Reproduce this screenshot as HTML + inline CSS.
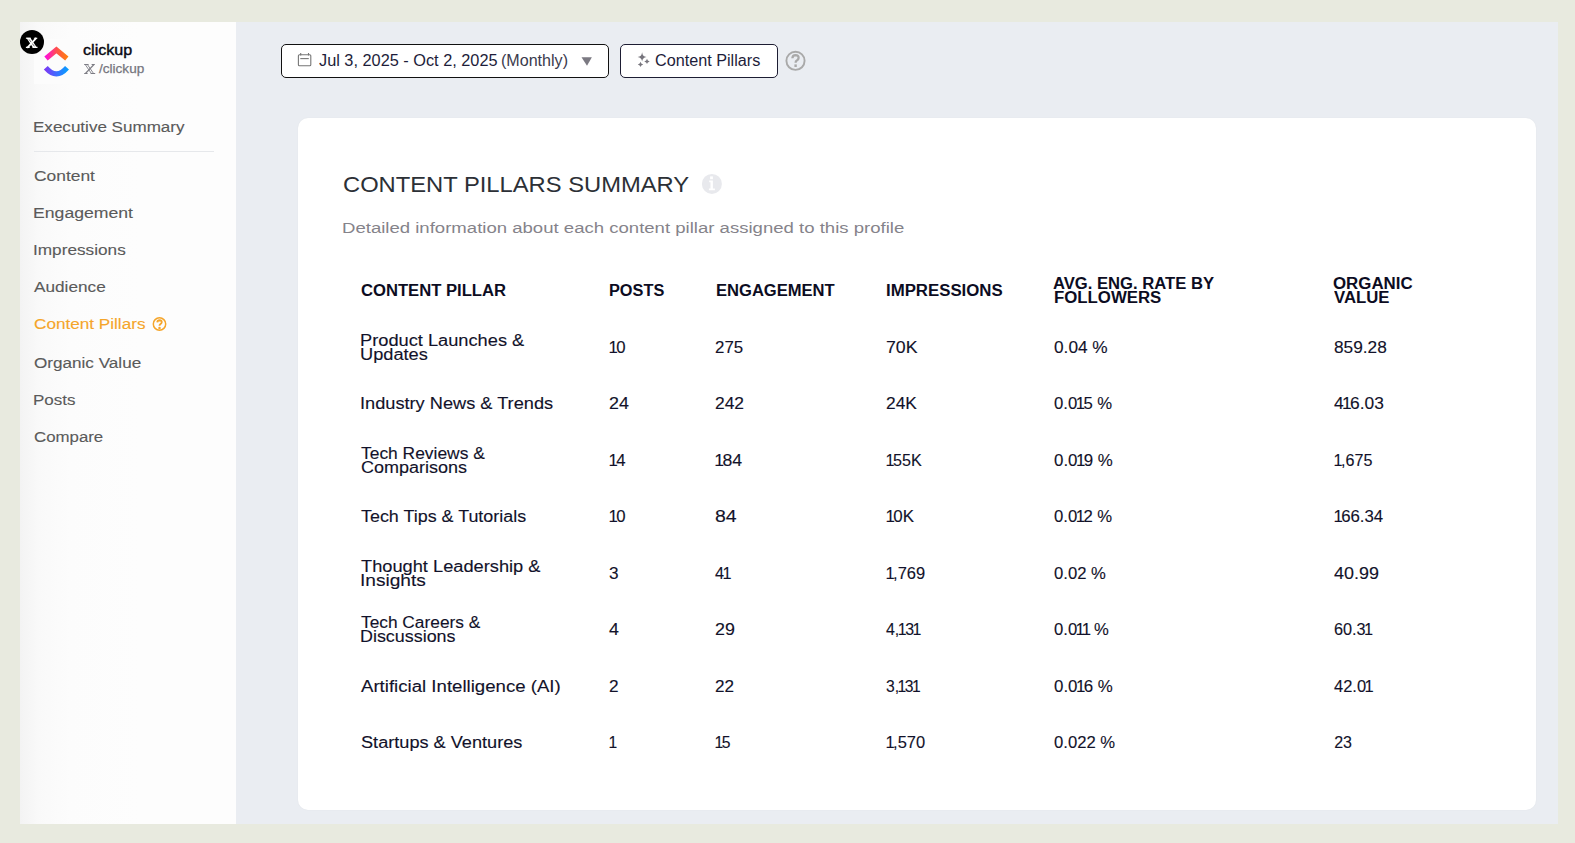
<!DOCTYPE html>
<html><head><meta charset="utf-8">
<style>
html,body{margin:0;padding:0;}
body{width:1575px;height:843px;background:#e8eadf;position:relative;overflow:hidden;font-family:"Liberation Sans",sans-serif;}
.abs{position:absolute;}
.t{position:absolute;white-space:nowrap;transform-origin:0 0;font-family:"Liberation Sans",sans-serif;}
#frame{position:absolute;left:20px;top:22px;width:1538px;height:802px;background:#eaedf2;}
#side{position:absolute;left:20px;top:22px;width:216px;height:802px;background:linear-gradient(90deg,#f3f3f3 0px,#f9f9f9 18px,#fcfcfc 50px,#fdfdfd 120px,#fdfdfd 100%);}
#card{position:absolute;left:298px;top:118px;width:1238px;height:692px;background:#fff;border-radius:10px;box-shadow:0 0 1.5px rgba(0,0,0,0.06);}
.btn{position:absolute;box-sizing:border-box;background:#fff;border:1.4px solid #111;border-radius:5px;}
</style></head><body>
<div id="frame"></div>
<div id="side"></div>
<div class="abs" style="left:34px;top:39px;width:45px;height:45px;background:#fcfcfc"></div>
<!-- sidebar divider -->
<div class="abs" style="left:34px;top:151px;width:180px;height:1px;background:#e6e8eb"></div>
<!-- X badge -->
<div class="abs" style="left:20px;top:30px;width:24px;height:24px;border-radius:50%;background:#000"></div>
<svg class="abs" style="left:20px;top:30px" width="24" height="24" viewBox="0 0 24 24">
 <path d="M6.3 7.8 L10.3 7.8 L17.2 17.9 L13.2 17.9 Z" fill="#fff"/>
 <path d="M9 9.4 L14.5 16.4" stroke="#000" stroke-width="0.6"/>
 <path d="M16.4 7.8 L7.2 17.9" stroke="#fff" stroke-width="1.8"/>
 <path d="M5.9 8.3h5M13.9 8.3h3.4M5.9 17.4h3.8M12.5 17.4h5" stroke="#fff" stroke-width="1.1"/>
</svg>
<!-- logo -->
<svg class="abs" style="left:40px;top:42px" width="34" height="38" viewBox="40 42 34 38">
 <defs>
  <linearGradient id="g1" x1="0" y1="0" x2="1" y2="0"><stop offset="0" stop-color="#ff10d8"/><stop offset="0.5" stop-color="#ff4f4f"/><stop offset="1" stop-color="#ff7d10"/></linearGradient>
  <linearGradient id="g2" x1="0" y1="0" x2="1" y2="0"><stop offset="0" stop-color="#7a3cf5"/><stop offset="0.5" stop-color="#3d6cff"/><stop offset="1" stop-color="#0a9cff"/></linearGradient>
 </defs>
 <path d="M46 58.6 L56.4 49.9 L66.8 58.6" fill="none" stroke="url(#g1)" stroke-width="5.2" stroke-linejoin="miter"/>
 <path d="M45.8 67.8 Q56.4 80 67 67.8" fill="none" stroke="url(#g2)" stroke-width="5.2"/>
</svg>
<!-- X small glyph next to /clickup -->
<svg class="abs" style="left:84px;top:64px" width="12" height="10" viewBox="0 0 12 10">
 <g fill="none" stroke="#7c7c84">
  <path d="M1.2 0.5 L7.4 9.5" stroke-width="0.9"/><path d="M3.4 0.5 L9.6 9.5" stroke-width="0.9"/>
  <path d="M10 0.5 L1.4 9.5" stroke-width="1.1"/>
  <path d="M0.2 0.5h4.4M7.6 0.5h3.2M0.2 9.5h3.4M6.6 9.5h4.6" stroke-width="1"/>
 </g>
</svg>
<!-- orange help icon in nav -->
<svg class="abs" style="left:150px;top:315px" width="19" height="19" viewBox="0 0 19 19">
 <circle cx="9.5" cy="9" r="6.2" fill="none" stroke="#f5a52a" stroke-width="1.5"/>
 <path d="M7.3 7.4 Q7.4 5.2 9.6 5.2 Q11.8 5.3 11.7 7.2 Q11.6 8.5 10.3 9.2 Q9.5 9.7 9.5 10.7" fill="none" stroke="#f5a52a" stroke-width="1.9"/>
 <circle cx="9.5" cy="12.9" r="1.25" fill="#f5a52a"/>
</svg>
<!-- top buttons -->
<div class="btn" style="left:281px;top:44px;width:328px;height:34px"></div>
<div class="btn" style="left:620px;top:44px;width:158px;height:34px;border-color:#1d1d33"></div>
<svg class="abs" style="left:296px;top:51px" width="17" height="17" viewBox="0 0 17 17">
 <g fill="none" stroke="#767676" stroke-width="1.1">
  <rect x="2.4" y="3.8" width="12.4" height="10.9" rx="1"/>
  <path d="M4.3 7.6h8.5"/><path d="M4.7 2v2.6M12.5 2v2.6"/>
 </g>
</svg>
<svg class="abs" style="left:578px;top:54px" width="18" height="15" viewBox="0 0 18 15">
 <path d="M3.5 3.3 L13.9 3.3 L9 11.8 Z" fill="#7b7982"/>
</svg>
<svg class="abs" style="left:634px;top:50px" width="18" height="18" viewBox="0 0 18 18">
 <g fill="#77757d">
  <path d="M8.1 2.2 Q8.5 6.5 12.5 7.1 Q8.5 7.7 8.1 11.6 Q7.7 7.7 3.6 7.1 Q7.7 6.5 8.1 2.2Z"/>
  <path d="M13 8.7 Q13.3 10.9 15.7 11.4 Q13.3 11.9 13 14.1 Q12.7 11.9 10.3 11.4 Q12.7 10.9 13 8.7Z"/>
  <path d="M6.5 11.7 Q6.8 13.9 9.2 14.4 Q6.8 14.9 6.5 17.1 Q6.2 14.9 3.8 14.4 Q6.2 13.9 6.5 11.7Z"/>
 </g>
</svg>
<svg class="abs" style="left:784px;top:49px" width="24" height="24" viewBox="0 0 24 24">
 <circle cx="11.5" cy="11.8" r="9.1" fill="none" stroke="#a9a9a9" stroke-width="1.9"/>
 <path d="M8.4 9.3 Q8.5 6.1 11.6 6.1 Q14.7 6.2 14.6 8.9 Q14.5 10.6 12.8 11.5 Q11.6 12.1 11.6 13.8" fill="none" stroke="#a9a9a9" stroke-width="2.3"/>
 <rect x="10.4" y="15.4" width="2.4" height="2.6" fill="#a9a9a9"/>
</svg>
<!-- card -->
<div id="card"></div>
<svg class="abs" style="left:700px;top:172px" width="24" height="24" viewBox="0 0 24 24">
 <circle cx="11.9" cy="11.9" r="10" fill="#e8e9ed"/>
 <rect x="10.1" y="4.4" width="2.8" height="2.8" fill="#fff"/>
 <path d="M9.2 8.6h3.7v8h2v1.6h-6v-1.6h1.6v-6.4h-1.3z" fill="#fff"/>
</svg>
<div class="t" style="left:83.31px;top:42.67px;font-size:14.5px;line-height:14.5px;font-weight:normal;color:#0a0a14;transform:scale(1.1116,1);transform-origin:0 12.32px;-webkit-text-stroke:0.4px #0a0a14">clickup</div>
<div class="t" style="left:99.42px;top:63.38px;font-size:12.5px;line-height:12.5px;font-weight:normal;color:#76767e;transform:scale(1.0857,1);transform-origin:0 10.62px;-webkit-text-stroke:0.25px #76767e">/clickup</div>
<div class="t" style="left:33.27px;top:119.02px;font-size:15.5px;line-height:15.5px;font-weight:normal;color:#5a5a5a;transform:scale(1.0993,1);transform-origin:0 13.17px;-webkit-text-stroke:0.12px #5a5a5a">Executive Summary</div>
<div class="t" style="left:34.36px;top:167.72px;font-size:15.5px;line-height:15.5px;font-weight:normal;color:#5a5a5a;transform:scale(1.1222,1);transform-origin:0 13.17px;-webkit-text-stroke:0.12px #5a5a5a">Content</div>
<div class="t" style="left:33.22px;top:204.92px;font-size:15.5px;line-height:15.5px;font-weight:normal;color:#5a5a5a;transform:scale(1.1379,1);transform-origin:0 13.17px;-webkit-text-stroke:0.12px #5a5a5a">Engagement</div>
<div class="t" style="left:33.26px;top:241.82px;font-size:15.5px;line-height:15.5px;font-weight:normal;color:#5a5a5a;transform:scale(1.1098,1);transform-origin:0 13.17px;-webkit-text-stroke:0.12px #5a5a5a">Impressions</div>
<div class="t" style="left:34.37px;top:278.62px;font-size:15.5px;line-height:15.5px;font-weight:normal;color:#5a5a5a;transform:scale(1.1094,1);transform-origin:0 13.17px;-webkit-text-stroke:0.12px #5a5a5a">Audience</div>
<div class="t" style="left:34.37px;top:315.93px;font-size:15.5px;line-height:15.5px;font-weight:normal;color:#f5a52a;transform:scale(1.1060,1);transform-origin:0 13.17px;-webkit-text-stroke:0.12px #f5a52a">Content Pillars</div>
<div class="t" style="left:34.37px;top:354.62px;font-size:15.5px;line-height:15.5px;font-weight:normal;color:#5a5a5a;transform:scale(1.1042,1);transform-origin:0 13.17px;-webkit-text-stroke:0.12px #5a5a5a">Organic Value</div>
<div class="t" style="left:33.27px;top:391.62px;font-size:15.5px;line-height:15.5px;font-weight:normal;color:#5a5a5a;transform:scale(1.0973,1);transform-origin:0 13.17px;-webkit-text-stroke:0.12px #5a5a5a">Posts</div>
<div class="t" style="left:34.37px;top:428.62px;font-size:15.5px;line-height:15.5px;font-weight:normal;color:#5a5a5a;transform:scale(1.0857,1);transform-origin:0 13.17px;-webkit-text-stroke:0.12px #5a5a5a">Compare</div>
<div class="t" style="left:319.19px;top:53.30px;font-size:16px;line-height:16px;font-weight:normal;color:#1d1d3a;transform:scale(1.0190,1);transform-origin:0 13.60px">Jul 3, 2025 - Oct 2, 2025</div>
<div class="t" style="left:501.39px;top:53.30px;font-size:16px;line-height:16px;font-weight:normal;color:#3a3a4c;transform:scale(1.0046,1);transform-origin:0 13.60px">(Monthly)</div>
<div class="t" style="left:655.29px;top:53.30px;font-size:16px;line-height:16px;font-weight:normal;color:#1d1d3a;transform:scale(1.0117,1);transform-origin:0 13.60px">Content Pillars</div>
<div class="t" style="left:342.94px;top:174.07px;font-size:22.5px;line-height:22.5px;font-weight:normal;color:#2c3036;transform:scale(1.0552,1);transform-origin:0 19.12px">CONTENT PILLARS SUMMARY</div>
<div class="t" style="left:342.48px;top:219.82px;font-size:15.5px;line-height:15.5px;font-weight:normal;color:#85838a;transform:scale(1.1974,1);transform-origin:0 13.17px">Detailed information about each content pillar assigned to this profile</div>
<div class="t" style="left:360.89px;top:282.50px;font-size:16px;line-height:16px;font-weight:bold;color:#0c0c22;transform:scale(1.0388,1);transform-origin:0 13.60px">CONTENT PILLAR</div>
<div class="t" style="left:609.18px;top:282.50px;font-size:16px;line-height:16px;font-weight:bold;color:#0c0c22;transform:scale(1.0189,1);transform-origin:0 13.60px">POSTS</div>
<div class="t" style="left:715.98px;top:282.50px;font-size:16px;line-height:16px;font-weight:bold;color:#0c0c22;transform:scale(1.0351,1);transform-origin:0 13.60px">ENGAGEMENT</div>
<div class="t" style="left:886.36px;top:282.50px;font-size:16px;line-height:16px;font-weight:bold;color:#0c0c22;transform:scale(1.0500,1);transform-origin:0 13.60px">IMPRESSIONS</div>
<div class="t" style="left:1053.28px;top:276.40px;font-size:16px;line-height:16px;font-weight:bold;color:#0c0c22;transform:scale(1.0390,1);transform-origin:0 13.60px">AVG. ENG. RATE BY</div>
<div class="t" style="left:1053.98px;top:290.40px;font-size:16px;line-height:16px;font-weight:bold;color:#0c0c22;transform:scale(1.0495,1);transform-origin:0 13.60px">FOLLOWERS</div>
<div class="t" style="left:1333.48px;top:276.40px;font-size:16px;line-height:16px;font-weight:bold;color:#0c0c22;transform:scale(1.0541,1);transform-origin:0 13.60px">ORGANIC</div>
<div class="t" style="left:1334.18px;top:290.40px;font-size:16px;line-height:16px;font-weight:bold;color:#0c0c22;transform:scale(1.0462,1);transform-origin:0 13.60px">VALUE</div>
<div class="t" style="left:360.43px;top:333.30px;font-size:16px;line-height:16px;font-weight:normal;color:#12122a;transform:scale(1.1399,1);transform-origin:0 13.60px;-webkit-text-stroke:0.12px #12122a">Product Launches &</div>
<div class="t" style="left:360.43px;top:347.30px;font-size:16px;line-height:16px;font-weight:normal;color:#12122a;transform:scale(1.1379,1);transform-origin:0 13.60px;-webkit-text-stroke:0.12px #12122a">Updates</div>
<div class="t" style="left:610.43px;top:340.30px;font-size:16px;line-height:16px;font-weight:normal;color:#12122a;transform:scale(1.0467,1);transform-origin:0 13.60px;-webkit-text-stroke:0.12px #12122a"><span style="margin:0 -1.5px">1</span>0</div>
<div class="t" style="left:715.18px;top:340.30px;font-size:16px;line-height:16px;font-weight:normal;color:#12122a;transform:scale(1.0538,1);transform-origin:0 13.60px;-webkit-text-stroke:0.12px #12122a">275</div>
<div class="t" style="left:885.95px;top:340.30px;font-size:16px;line-height:16px;font-weight:normal;color:#12122a;transform:scale(1.1071,1);transform-origin:0 13.60px;-webkit-text-stroke:0.12px #12122a">70K</div>
<div class="t" style="left:1053.96px;top:340.30px;font-size:16px;line-height:16px;font-weight:normal;color:#12122a;transform:scale(1.0776,1);transform-origin:0 13.60px;-webkit-text-stroke:0.12px #12122a">0.04 %</div>
<div class="t" style="left:1334.17px;top:340.30px;font-size:16px;line-height:16px;font-weight:normal;color:#12122a;transform:scale(1.0792,1);transform-origin:0 13.60px;-webkit-text-stroke:0.12px #12122a">859.28</div>
<div class="t" style="left:360.44px;top:396.10px;font-size:16px;line-height:16px;font-weight:normal;color:#12122a;transform:scale(1.1369,1);transform-origin:0 13.60px;-webkit-text-stroke:0.12px #12122a">Industry News & Trends</div>
<div class="t" style="left:609.36px;top:396.10px;font-size:16px;line-height:16px;font-weight:normal;color:#12122a;transform:scale(1.1176,1);transform-origin:0 13.60px;-webkit-text-stroke:0.12px #12122a">24</div>
<div class="t" style="left:715.16px;top:396.10px;font-size:16px;line-height:16px;font-weight:normal;color:#12122a;transform:scale(1.0885,1);transform-origin:0 13.60px;-webkit-text-stroke:0.12px #12122a">242</div>
<div class="t" style="left:885.96px;top:396.10px;font-size:16px;line-height:16px;font-weight:normal;color:#12122a;transform:scale(1.0821,1);transform-origin:0 13.60px;-webkit-text-stroke:0.12px #12122a">24K</div>
<div class="t" style="left:1053.98px;top:396.10px;font-size:16px;line-height:16px;font-weight:normal;color:#12122a;transform:scale(1.0436,1);transform-origin:0 13.60px;-webkit-text-stroke:0.12px #12122a">0.0<span style="margin:0 -1.5px">1</span>5 %</div>
<div class="t" style="left:1334.17px;top:396.10px;font-size:16px;line-height:16px;font-weight:normal;color:#12122a;transform:scale(1.0844,1);transform-origin:0 13.60px;-webkit-text-stroke:0.12px #12122a">4<span style="margin:0 -1.5px">1</span>6.03</div>
<div class="t" style="left:360.78px;top:445.50px;font-size:16px;line-height:16px;font-weight:normal;color:#12122a;transform:scale(1.0877,1);transform-origin:0 13.60px;-webkit-text-stroke:0.12px #12122a">Tech Reviews &</div>
<div class="t" style="left:360.88px;top:459.50px;font-size:16px;line-height:16px;font-weight:normal;color:#12122a;transform:scale(1.1245,1);transform-origin:0 13.60px;-webkit-text-stroke:0.12px #12122a">Comparisons</div>
<div class="t" style="left:610.43px;top:452.50px;font-size:16px;line-height:16px;font-weight:normal;color:#12122a;transform:scale(1.0467,1);transform-origin:0 13.60px;-webkit-text-stroke:0.12px #12122a"><span style="margin:0 -1.5px">1</span>4</div>
<div class="t" style="left:716.26px;top:452.50px;font-size:16px;line-height:16px;font-weight:normal;color:#12122a;transform:scale(1.1042,1);transform-origin:0 13.60px;-webkit-text-stroke:0.12px #12122a"><span style="margin:0 -1.5px">1</span>84</div>
<div class="t" style="left:887.00px;top:452.50px;font-size:16px;line-height:16px;font-weight:normal;color:#12122a;transform:scale(1.0086,1);transform-origin:0 13.60px;-webkit-text-stroke:0.12px #12122a"><span style="margin:0 -1.5px">1</span>55K</div>
<div class="t" style="left:1053.97px;top:452.50px;font-size:16px;line-height:16px;font-weight:normal;color:#12122a;transform:scale(1.0545,1);transform-origin:0 13.60px;-webkit-text-stroke:0.12px #12122a">0.0<span style="margin:0 -1.5px">1</span>9 %</div>
<div class="t" style="left:1335.20px;top:452.50px;font-size:16px;line-height:16px;font-weight:normal;color:#12122a;transform:scale(1.0081,1);transform-origin:0 13.60px;-webkit-text-stroke:0.12px #12122a"><span style="margin:0 -1.5px">1</span>,675</div>
<div class="t" style="left:360.78px;top:508.60px;font-size:16px;line-height:16px;font-weight:normal;color:#12122a;transform:scale(1.1184,1);transform-origin:0 13.60px;-webkit-text-stroke:0.12px #12122a">Tech Tips & Tutorials</div>
<div class="t" style="left:610.43px;top:508.60px;font-size:16px;line-height:16px;font-weight:normal;color:#12122a;transform:scale(1.0467,1);transform-origin:0 13.60px;-webkit-text-stroke:0.12px #12122a"><span style="margin:0 -1.5px">1</span>0</div>
<div class="t" style="left:715.11px;top:508.60px;font-size:16px;line-height:16px;font-weight:normal;color:#12122a;transform:scale(1.2176,1);transform-origin:0 13.60px;-webkit-text-stroke:0.12px #12122a">84</div>
<div class="t" style="left:887.03px;top:508.60px;font-size:16px;line-height:16px;font-weight:normal;color:#12122a;transform:scale(1.0577,1);transform-origin:0 13.60px;-webkit-text-stroke:0.12px #12122a"><span style="margin:0 -1.5px">1</span>0K</div>
<div class="t" style="left:1053.98px;top:508.60px;font-size:16px;line-height:16px;font-weight:normal;color:#12122a;transform:scale(1.0436,1);transform-origin:0 13.60px;-webkit-text-stroke:0.12px #12122a">0.0<span style="margin:0 -1.5px">1</span>2 %</div>
<div class="t" style="left:1335.23px;top:508.60px;font-size:16px;line-height:16px;font-weight:normal;color:#12122a;transform:scale(1.0489,1);transform-origin:0 13.60px;-webkit-text-stroke:0.12px #12122a"><span style="margin:0 -1.5px">1</span>66.34</div>
<div class="t" style="left:360.77px;top:559.20px;font-size:16px;line-height:16px;font-weight:normal;color:#12122a;transform:scale(1.1401,1);transform-origin:0 13.60px;-webkit-text-stroke:0.12px #12122a">Thought Leadership &</div>
<div class="t" style="left:360.37px;top:573.20px;font-size:16px;line-height:16px;font-weight:normal;color:#12122a;transform:scale(1.1944,1);transform-origin:0 13.60px;-webkit-text-stroke:0.12px #12122a">Insights</div>
<div class="t" style="left:609.38px;top:566.20px;font-size:16px;line-height:16px;font-weight:normal;color:#12122a;transform:scale(1.0750,1);transform-origin:0 13.60px;-webkit-text-stroke:0.12px #12122a">3</div>
<div class="t" style="left:715.19px;top:566.20px;font-size:16px;line-height:16px;font-weight:normal;color:#12122a;transform:scale(1.0133,1);transform-origin:0 13.60px;-webkit-text-stroke:0.12px #12122a">4<span style="margin:0 -1.5px">1</span></div>
<div class="t" style="left:887.01px;top:566.20px;font-size:16px;line-height:16px;font-weight:normal;color:#12122a;transform:scale(1.0297,1);transform-origin:0 13.60px;-webkit-text-stroke:0.12px #12122a"><span style="margin:0 -1.5px">1</span>,769</div>
<div class="t" style="left:1053.98px;top:566.20px;font-size:16px;line-height:16px;font-weight:normal;color:#12122a;transform:scale(1.0408,1);transform-origin:0 13.60px;-webkit-text-stroke:0.12px #12122a">0.02 %</div>
<div class="t" style="left:1334.15px;top:566.20px;font-size:16px;line-height:16px;font-weight:normal;color:#12122a;transform:scale(1.1205,1);transform-origin:0 13.60px;-webkit-text-stroke:0.12px #12122a">40.99</div>
<div class="t" style="left:360.78px;top:614.70px;font-size:16px;line-height:16px;font-weight:normal;color:#12122a;transform:scale(1.0818,1);transform-origin:0 13.60px;-webkit-text-stroke:0.12px #12122a">Tech Careers &</div>
<div class="t" style="left:360.46px;top:628.70px;font-size:16px;line-height:16px;font-weight:normal;color:#12122a;transform:scale(1.1190,1);transform-origin:0 13.60px;-webkit-text-stroke:0.12px #12122a">Discussions</div>
<div class="t" style="left:609.37px;top:621.70px;font-size:16px;line-height:16px;font-weight:normal;color:#12122a;transform:scale(1.1111,1);transform-origin:0 13.60px;-webkit-text-stroke:0.12px #12122a">4</div>
<div class="t" style="left:715.15px;top:621.70px;font-size:16px;line-height:16px;font-weight:normal;color:#12122a;transform:scale(1.1176,1);transform-origin:0 13.60px;-webkit-text-stroke:0.12px #12122a">29</div>
<div class="t" style="left:886.00px;top:621.70px;font-size:16px;line-height:16px;font-weight:normal;color:#12122a;transform:scale(0.9943,1);transform-origin:0 13.60px;-webkit-text-stroke:0.12px #12122a">4,<span style="margin:0 -1.5px">1</span>3<span style="margin:0 -1.5px">1</span></div>
<div class="t" style="left:1053.98px;top:621.70px;font-size:16px;line-height:16px;font-weight:normal;color:#12122a;transform:scale(1.0404,1);transform-origin:0 13.60px;-webkit-text-stroke:0.12px #12122a">0.0<span style="margin:0 -1.5px">1</span><span style="margin:0 -1.5px">1</span> %</div>
<div class="t" style="left:1334.19px;top:621.70px;font-size:16px;line-height:16px;font-weight:normal;color:#12122a;transform:scale(1.0158,1);transform-origin:0 13.60px;-webkit-text-stroke:0.12px #12122a">60.3<span style="margin:0 -1.5px">1</span></div>
<div class="t" style="left:360.87px;top:678.50px;font-size:16px;line-height:16px;font-weight:normal;color:#12122a;transform:scale(1.1637,1);transform-origin:0 13.60px;-webkit-text-stroke:0.12px #12122a">Artificial Intelligence (AI)</div>
<div class="t" style="left:609.38px;top:678.50px;font-size:16px;line-height:16px;font-weight:normal;color:#12122a;transform:scale(1.0750,1);transform-origin:0 13.60px;-webkit-text-stroke:0.12px #12122a">2</div>
<div class="t" style="left:715.17px;top:678.50px;font-size:16px;line-height:16px;font-weight:normal;color:#12122a;transform:scale(1.0706,1);transform-origin:0 13.60px;-webkit-text-stroke:0.12px #12122a">22</div>
<div class="t" style="left:886.01px;top:678.50px;font-size:16px;line-height:16px;font-weight:normal;color:#12122a;transform:scale(0.9800,1);transform-origin:0 13.60px;-webkit-text-stroke:0.12px #12122a">3,<span style="margin:0 -1.5px">1</span>3<span style="margin:0 -1.5px">1</span></div>
<div class="t" style="left:1053.97px;top:678.50px;font-size:16px;line-height:16px;font-weight:normal;color:#12122a;transform:scale(1.0545,1);transform-origin:0 13.60px;-webkit-text-stroke:0.12px #12122a">0.0<span style="margin:0 -1.5px">1</span>6 %</div>
<div class="t" style="left:1334.19px;top:678.50px;font-size:16px;line-height:16px;font-weight:normal;color:#12122a;transform:scale(1.0289,1);transform-origin:0 13.60px;-webkit-text-stroke:0.12px #12122a">42.0<span style="margin:0 -1.5px">1</span></div>
<div class="t" style="left:360.87px;top:734.60px;font-size:16px;line-height:16px;font-weight:normal;color:#12122a;transform:scale(1.1338,1);transform-origin:0 13.60px;-webkit-text-stroke:0.12px #12122a">Startups & Ventures</div>
<div class="t" style="left:610.39px;top:734.60px;font-size:16px;line-height:16px;font-weight:normal;color:#12122a;transform:scale(0.9800,1);transform-origin:0 13.60px;-webkit-text-stroke:0.12px #12122a"><span style="margin:0 -1.5px">1</span></div>
<div class="t" style="left:716.19px;top:734.60px;font-size:16px;line-height:16px;font-weight:normal;color:#12122a;transform:scale(0.9800,1);transform-origin:0 13.60px;-webkit-text-stroke:0.12px #12122a"><span style="margin:0 -1.5px">1</span>5</div>
<div class="t" style="left:887.01px;top:734.60px;font-size:16px;line-height:16px;font-weight:normal;color:#12122a;transform:scale(1.0297,1);transform-origin:0 13.60px;-webkit-text-stroke:0.12px #12122a"><span style="margin:0 -1.5px">1</span>,570</div>
<div class="t" style="left:1053.98px;top:734.60px;font-size:16px;line-height:16px;font-weight:normal;color:#12122a;transform:scale(1.0414,1);transform-origin:0 13.60px;-webkit-text-stroke:0.12px #12122a">0.022 %</div>
<div class="t" style="left:1334.20px;top:734.60px;font-size:16px;line-height:16px;font-weight:normal;color:#12122a;transform:scale(1.0000,1);transform-origin:0 13.60px;-webkit-text-stroke:0.12px #12122a">23</div>
</body></html>
